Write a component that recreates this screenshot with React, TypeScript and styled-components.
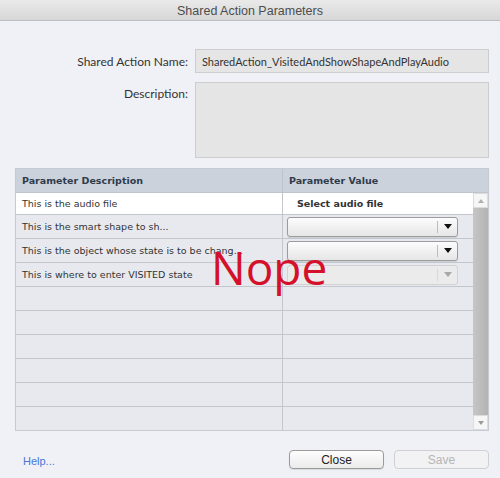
import React from "react";
import styled, { createGlobalStyle } from "styled-components";

const Global = createGlobalStyle`
  html, body { margin: 0; padding: 0; background: #f0f1f6; }
  * { box-sizing: border-box; }
`;

const Dialog = styled.div`
  position: relative;
  width: 500px;
  height: 478px;
  background: #f0f1f6;
  font-family: "Liberation Sans", Arial, sans-serif;
  display: flex;
  flex-direction: column;
  overflow: hidden;
`;

const TitleBar = styled.div`
  height: 21px;
  background: linear-gradient(#eaeaea, #d7d7d7);
  border-bottom: 1px solid #bdbdbd;
  display: flex;
  align-items: center;
  justify-content: center;
  font-size: 12.5px;
  color: #4d4d4d;
  padding-top: 1px;
`;

const Body = styled.div`
  display: flex;
  flex-direction: column;
  padding: 28px 11px 0 15px;
`;

const FormRow = styled.div<{ $mt?: number }>`
  display: grid;
  grid-template-columns: 173px 294px;
  column-gap: 7px;
  margin-top: ${(p) => p.$mt ?? 0}px;
`;

const Label = styled.div<{ $top?: boolean }>`
  font-family: Lato, "Liberation Sans", sans-serif;
  font-size: 12px;
  color: #333;
  display: flex;
  justify-content: flex-end;
  align-items: ${(p) => (p.$top ? "flex-start" : "center")};
  padding-top: ${(p) => (p.$top ? 4 : 0)}px;
`;

const Field = styled.div<{ $h: number }>`
  height: ${(p) => p.$h}px;
  background: #e5e5e5;
  border: 1px solid #cdcdcd;
  font-family: Lato, "Liberation Sans", sans-serif;
  font-size: 11px;
  color: #333;
  padding: 0 6px;
  display: flex;
  align-items: center;
`;

const Table = styled.div`
  margin-top: 10px;
  width: 474px;
  border: 1px solid #c6cad1;
  display: flex;
  flex-direction: column;
  font-family: "DejaVu Sans", sans-serif;
  font-size: 9.5px;
`;

const Cols = styled.div`
  display: grid;
  grid-template-columns: 267px 1fr;
`;

const HeaderRow = styled(Cols)`
  height: 24px;
  background: #ccd2dc;
  border-bottom: 1px solid #c0c5cd;
`;

const HeadCell = styled.div<{ $first?: boolean }>`
  display: flex;
  align-items: center;
  padding-left: 6px;
  font-weight: bold;
  color: #2e3b4b;
  border-right: ${(p) => (p.$first ? "1px solid #bec3cb" : "none")};
`;

const TableBody = styled.div`
  display: flex;
`;

const Rows = styled.div`
  flex: 1;
  display: flex;
  flex-direction: column;
`;

const Row = styled(Cols)<{ $white?: boolean; $last?: boolean }>`
  height: ${(p) => (p.$white ? 22 : p.$last ? 23 : 24)}px;
  background: ${(p) => (p.$white ? "#ffffff" : "#e8e9ee")};
  border-bottom: ${(p) => (p.$last ? "none" : "1px solid #c3c6cc")};
`;

const Cell = styled.div<{ $first?: boolean; $bold?: boolean; $pl?: number }>`
  display: flex;
  align-items: center;
  padding-left: ${(p) => p.$pl ?? 6}px;
  color: #333;
  font-weight: ${(p) => (p.$bold ? "bold" : "normal")};
  border-right: ${(p) => (p.$first ? "1px solid #c3c6cc" : "none")};
  white-space: nowrap;
  overflow: hidden;
`;

const Select = styled.div<{ $disabled?: boolean }>`
  width: 171px;
  height: 20px;
  border: 1px solid ${(p) => (p.$disabled ? "#d2d2d2" : "#9c9c9c")};
  border-radius: 3px;
  background: ${(p) =>
    p.$disabled ? "#ebebeb" : "linear-gradient(#fcfcfc, #e6e6e6)"};
  box-shadow: ${(p) => (p.$disabled ? "none" : "0 1px 1px rgba(0,0,0,0.12)")};
  display: flex;
  justify-content: flex-end;
  align-items: center;
`;

const SelectArrow = styled.div<{ $disabled?: boolean }>`
  width: 20px;
  height: 12px;
  border-left: 1px solid ${(p) => (p.$disabled ? "#d8d8d8" : "#bdbdbd")};
  display: flex;
  align-items: center;
  justify-content: center;
  &::after {
    content: "";
    border-left: 4px solid transparent;
    border-right: 4px solid transparent;
    border-top: 5px solid ${(p) => (p.$disabled ? "#a8a8a8" : "#111")};
  }
`;

const Scrollbar = styled.div`
  width: 15px;
  display: flex;
  flex-direction: column;
  background: linear-gradient(to right, #c6c6c6, #b3b3b3);
  justify-content: space-between;
`;

const ScrollBtn = styled.div<{ $down?: boolean }>`
  width: 15px;
  height: 15px;
  background: #f6f6f6;
  border: 1px solid #dcdcdc;
  display: flex;
  align-items: center;
  justify-content: center;
  &::after {
    content: "";
    border-left: 3px solid transparent;
    border-right: 3px solid transparent;
    ${(p) =>
      p.$down
        ? "border-top: 4px solid #9a9a9a;"
        : "border-bottom: 4px solid #b0b0b0;"}
  }
`;

const Footer = styled.div`
  margin-top: 19px;
  display: flex;
  align-items: center;
  padding: 0 0 0 8px;
`;

const Help = styled.a`
  font-size: 11px;
  color: #4677d6;
  flex: 1;
  margin-top: 2px;
`;

const Button = styled.div<{ $disabled?: boolean }>`
  width: 95px;
  height: 19px;
  margin-left: 10px;
  border: 1px solid ${(p) => (p.$disabled ? "#d0d0d0" : "#9a9a9a")};
  border-radius: 4px;
  background: ${(p) =>
    p.$disabled ? "#f2f2f4" : "linear-gradient(#fdfdfd, #ebebeb)"};
  box-shadow: ${(p) => (p.$disabled ? "none" : "0 1px 1px rgba(0,0,0,0.1)")};
  color: ${(p) => (p.$disabled ? "#b5b5b5" : "#222")};
  font-size: 12px;
  display: flex;
  align-items: center;
  justify-content: center;
`;

const Nope = styled.div`
  position: absolute;
  left: 211px;
  top: 244px;
  font-family: "Open Sans", sans-serif;
  font-size: 46px;
  line-height: 46px;
  color: #d4102b;
  pointer-events: none;
`;

type RowData = { desc: string; value?: "label" | "select" | "disabled" };

const rows: RowData[] = [
  { desc: "This is the audio file", value: "label" },
  { desc: "This is the smart shape to sh...", value: "select" },
  { desc: "This is the object whose state is to be chang...", value: "select" },
  { desc: "This is where to enter VISITED state", value: "disabled" },
  { desc: "" },
  { desc: "" },
  { desc: "" },
  { desc: "" },
  { desc: "" },
  { desc: "" },
];

export default function App() {
  return (
    <Dialog>
      <Global />
      <TitleBar>Shared Action Parameters</TitleBar>
      <Body>
        <FormRow>
          <Label>Shared Action Name:</Label>
          <Field $h={24}>SharedAction_VisitedAndShowShapeAndPlayAudio</Field>
        </FormRow>
        <FormRow $mt={9}>
          <Label $top>Description:</Label>
          <Field $h={76} />
        </FormRow>
        <Table>
          <HeaderRow>
            <HeadCell $first>Parameter Description</HeadCell>
            <HeadCell>Parameter Value</HeadCell>
          </HeaderRow>
          <TableBody>
            <Rows>
              {rows.map((r, i) => (
                <Row key={i} $white={i === 0} $last={i === rows.length - 1}>
                  <Cell $first>{r.desc}</Cell>
                  {r.value === "label" ? (
                    <Cell $bold $pl={14}>
                      Select audio file
                    </Cell>
                  ) : r.value === "select" || r.value === "disabled" ? (
                    <Cell $pl={4}>
                      <Select $disabled={r.value === "disabled"}>
                        <SelectArrow $disabled={r.value === "disabled"} />
                      </Select>
                    </Cell>
                  ) : (
                    <Cell />
                  )}
                </Row>
              ))}
            </Rows>
            <Scrollbar>
              <ScrollBtn />
              <ScrollBtn $down />
            </Scrollbar>
          </TableBody>
        </Table>
        <Footer>
          <Help>Help...</Help>
          <Button>Close</Button>
          <Button $disabled>Save</Button>
        </Footer>
      </Body>
      <Nope>Nope</Nope>
    </Dialog>
  );
}
